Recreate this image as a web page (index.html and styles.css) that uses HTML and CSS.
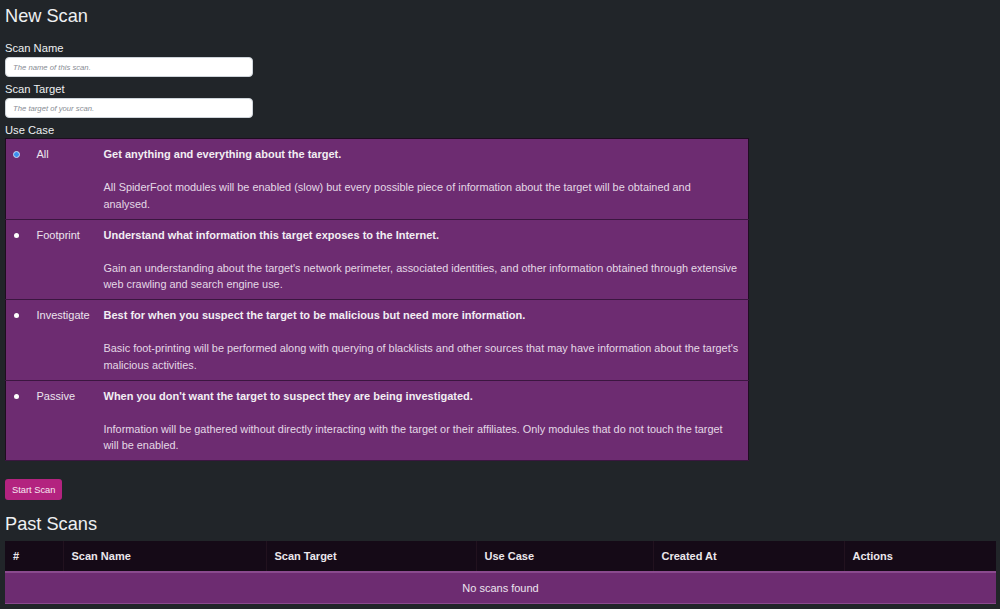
FILE: index.html
```html
<!DOCTYPE html>
<html>
<head>
<meta charset="utf-8">
<title>New Scan</title>
<link rel="stylesheet" href="styles.css">
</head>
<body>
<div class="page">
  <h2 class="title">New Scan</h2>
  <div class="field">
    <label class="label">Scan Name</label>
    <input class="input" type="text" placeholder="The name of this scan.">
  </div>
  <div class="field">
    <label class="label">Scan Target</label>
    <input class="input" type="text" placeholder="The target of your scan.">
  </div>
  <div class="label usecase-label">Use Case</div>
  <table class="usecases">
    <tr>
      <td class="c-radio"><span class="radio checked"></span></td>
      <td class="c-name">All</td>
      <td class="c-desc"><b>Get anything and everything about the target.</b><br><br>All SpiderFoot modules will be enabled (slow) but every possible piece of information about the target will be obtained and analysed.</td>
    </tr>
    <tr>
      <td class="c-radio"><span class="radio"></span></td>
      <td class="c-name">Footprint</td>
      <td class="c-desc"><b>Understand what information this target exposes to the Internet.</b><br><br>Gain an understanding about the target's network perimeter, associated identities, and other information obtained through extensive web crawling and search engine use.</td>
    </tr>
    <tr>
      <td class="c-radio"><span class="radio"></span></td>
      <td class="c-name">Investigate</td>
      <td class="c-desc"><b>Best for when you suspect the target to be malicious but need more information.</b><br><br>Basic foot-printing will be performed along with querying of blacklists and other sources that may have information about the target's malicious activities.</td>
    </tr>
    <tr>
      <td class="c-radio"><span class="radio"></span></td>
      <td class="c-name">Passive</td>
      <td class="c-desc"><b>When you don't want the target to suspect they are being investigated.</b><br><br>Information will be gathered without directly interacting with the target or their affiliates. Only modules that do not touch the target will be enabled.</td>
    </tr>
  </table>
  <button class="btn">Start Scan</button>
  <h2 class="title past">Past Scans</h2>
  <table class="scans">
    <thead>
      <tr>
        <th class="w1">#</th>
        <th class="w2">Scan Name</th>
        <th class="w3">Scan Target</th>
        <th class="w4">Use Case</th>
        <th class="w5">Created At</th>
        <th class="w6">Actions</th>
      </tr>
    </thead>
    <tbody>
      <tr><td colspan="6" class="empty">No scans found</td></tr>
    </tbody>
  </table>
</div>
</body>
</html>
```
FILE: styles.css
```css
html, body {
  margin: 0;
  background: #212529;
}
body {
  font-family: "Liberation Sans", Arial, Helvetica, sans-serif;
  font-size: 11px;
  line-height: 16.5px;
  color: #e9ecef;
}
.page {
  padding: 0 4px 0 5px;
}
.title {
  font-size: 18.2px;
  font-weight: 400;
  line-height: 22px;
  margin: 5px 0 13px;
  color: #eef0f2;
}
.field {
  display: flex;
  flex-direction: column;
}
.label {
  display: block;
  font-size: 11.2px;
  line-height: 17px;
  color: #eef0f2;
}
.usecase-label {
  line-height: 16px;
}
.input {
  box-sizing: border-box;
  width: 25%;
  height: 20px;
  margin: 0 0 4px;
  padding: 0 7px;
  border: 1px solid #ced4da;
  border-radius: 4px;
  background: #fff;
  font-family: inherit;
  font-size: 7.7px;
  font-style: italic;
}
.input::placeholder {
  color: #888c94;
}
.usecases {
  width: 75.1%;
  table-layout: fixed;
  border-collapse: collapse;
  background: #6d2c71;
  border: 1px solid #1e0d20;
}
.usecases td {
  box-sizing: border-box;
  vertical-align: top;
  padding: 7px 8px 6.5px;
  border-bottom: 1px solid #3b1640;
}
.c-radio {
  width: 23px;
}
.c-name {
  width: 67px;
  color: #ece4ee;
}
.c-desc {
  color: #e4d8e6;
  font-size: 10.9px;
}
.c-desc b {
  color: #f2eef3;
  font-size: 11px;
}
.radio {
  display: block;
  width: 5px;
  height: 5px;
  margin-top: 6px;
  border-radius: 50%;
  background: #fff;
}
.radio.checked {
  width: 5px;
  height: 5px;
  background: #3b8ff0;
  border: 1px solid #c9dcf5;
  margin-left: -1px;
  margin-top: 5px;
}
.btn {
  display: block;
  margin: 18px 0 0;
  height: 21px;
  padding: 0 7px;
  border: 0;
  border-radius: 3px;
  background: #b3237f;
  color: #f6e8f1;
  font-family: inherit;
  font-size: 9.3px;
}
.past {
  margin: 13px 0 6px;
}
.scans {
  width: 100%;
  table-layout: fixed;
  border-collapse: collapse;
}
.scans th {
  box-sizing: border-box;
  background: #150a17;
  color: #ebe7ec;
  text-align: left;
  font-weight: 700;
  padding: 7px 8px;
  line-height: 16px;
  border-left: 1px solid #22121f;
  border-bottom: 2px solid #8a4a8e;
}
.scans th:first-child {
  border-left: 0;
}
.w1 { width: 58px; }
.w2 { width: 203px; }
.w3 { width: 210px; }
.w4 { width: 177px; }
.w5 { width: 191px; }
.empty {
  background: #6d2c71;
  text-align: center;
  padding: 7px 8px;
  line-height: 16px;
  color: #ece4ee;
  border-bottom: 1px solid #8a4a8e;
}
```
